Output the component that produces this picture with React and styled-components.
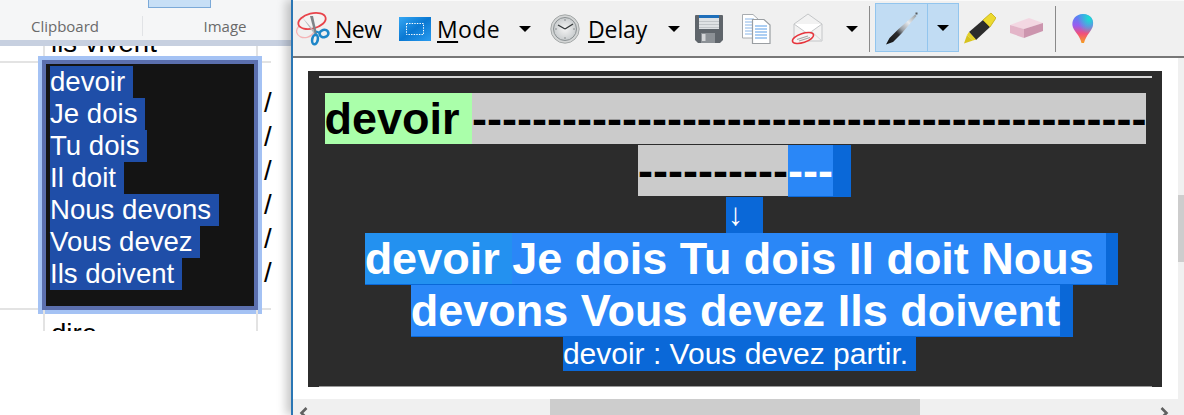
import React from "react";
import styled, { createGlobalStyle } from "styled-components";

const GlobalStyle = createGlobalStyle`
  html, body {
    margin: 0;
    padding: 0;
    background: #fff;
    overflow: hidden;
  }
  #root {
    width: 1184px;
    height: 415px;
  }
`;

const Page = styled.div`
  display: flex;
  width: 1184px;
  height: 415px;
  overflow: hidden;
  font-family: "Liberation Sans", Arial, sans-serif;
`;

/* left window, the document behind the snipping tool */
const LeftPane = styled.div`
  display: flex;
  flex-direction: column;
  width: 291px;
  flex: none;
`;

const Ribbon = styled.div`
  position: relative;
  display: flex;
  height: 40px;
  background: #f5f6f7;
  font-family: "Open Sans", sans-serif;
  font-size: 15px;
  color: #6a6a6a;
`;

const RibbonGroup = styled.div`
  flex: none;
  width: ${({ $w }) => $w}px;
  padding-left: ${({ $pl }) => $pl || 0}px;
  padding-right: ${({ $pr }) => $pr || 0}px;
  height: 20px;
  margin-top: 16px;
  line-height: 20px;
  text-align: center;
  border-right: ${({ $sep }) => ($sep ? "1px solid #e1e3e6" : "none")};
`;

const RibbonButton = styled.div`
  position: absolute;
  left: 148px;
  top: -1px;
  width: 61px;
  height: 7px;
  background: #c7dff6;
  border: 1px solid #7ba9d8;
`;

const RibbonEdge = styled.div`
  height: 6px;
  background: #c7d0e0;
`;

const TableRow = styled.div`
  position: relative;
  display: flex;
  width: 271px;
  height: ${({ $h }) => $h}px;
  flex: none;
  border-bottom: ${({ $last }) => ($last ? "none" : "2px solid #e3e3e3")};
`;

const Cell = styled.div`
  box-sizing: border-box;
  width: 215px;
  margin-left: 43px;
  padding-left: 6px;
  border-left: 2px solid #e3e3e3;
  border-right: 2px solid #e3e3e3;
  overflow: hidden;
  font-size: 27.6px;
  line-height: 32px;
  color: #000;
  flex: none;
`;

const ClippedWord = styled.div`
  margin-top: ${({ $top }) => $top}px;
`;

const Slashes = styled.div`
  display: flex;
  flex-direction: column;
  padding: 23px 0 0 6px;
  font-size: 27.6px;
  line-height: 34px;
  width: 8px;
  color: #000;
`;

const NoteCard = styled.div`
  position: absolute;
  left: 38px;
  top: -7px;
  box-sizing: border-box;
  width: 224px;
  height: 258px;
  padding: 6px 8px;
  background: #141414;
  border: 4px solid #a4c2f4;
  box-shadow: inset 0 0 0 4px #5b6fae;
  display: flex;
  flex-direction: column;
  align-items: flex-start;
`;

const NoteLine = styled.span`
  display: block;
  height: 32px;
  font-size: 27.6px;
  line-height: 32px;
  white-space: pre;
  color: #fff;
  background: #1f4ea8;
`;

/* snipping tool window */
const RightPane = styled.div`
  position: relative;
  display: flex;
  flex-direction: column;
  flex: 1;
  min-width: 0;
  box-sizing: border-box;
  background: #fff;
  border-left: 2px solid #2a76b4;
  box-shadow: -5px 0 9px rgba(0, 0, 0, 0.22);
`;

const Toolbar = styled.div`
  display: flex;
  align-items: center;
  box-sizing: border-box;
  height: 58px;
  flex: none;
  padding-left: 3px;
  background: #f0f0f0;
  border-top: 1px solid #fafafa;
  border-bottom: 2px solid #777;
`;

const IconSlot = styled.div`
  display: flex;
  flex: none;
  width: ${({ $w }) => $w}px;
  margin-left: ${({ $ml }) => $ml || 0}px;
  svg {
    display: block;
  }
`;

const ToolLabel = styled.span`
  flex: none;
  width: ${({ $w }) => $w}px;
  margin-left: ${({ $ml }) => $ml || 0}px;
  margin-top: 1px;
  font-family: "Open Sans", sans-serif;
  font-size: 23px;
  letter-spacing: ${({ $ls }) => $ls}px;
  white-space: nowrap;
  color: #000;
  u {
    text-underline-offset: 3px;
    text-decoration-thickness: 1.5px;
  }
`;

const Caret = styled.span`
  flex: none;
  width: 0;
  height: 0;
  margin-left: ${({ $ml }) => $ml || 0}px;
  border-left: 6.5px solid transparent;
  border-right: 6.5px solid transparent;
  border-top: 6.5px solid #000;
`;

const ToolSep = styled.span`
  flex: none;
  width: 1px;
  height: 46px;
  margin-left: ${({ $ml }) => $ml}px;
  background: #8a8a8a;
`;

const PenButton = styled.div`
  display: flex;
  flex: none;
  box-sizing: border-box;
  width: 84px;
  height: 49px;
  margin-left: 5px;
  margin-top: -2px;
  background: #c1dcf3;
  border: 1px solid #92c5ee;
`;

const PenFace = styled.div`
  display: flex;
  align-items: center;
  justify-content: center;
  width: 51px;
  border-right: 1px solid #92c5ee;
`;

const PenCaret = styled.div`
  display: flex;
  flex: 1;
  align-items: center;
  justify-content: center;
`;

const Middle = styled.div`
  display: flex;
  flex: 1;
  min-height: 0;
`;

const Canvas = styled.div`
  flex: 1;
  min-width: 0;
  padding: 13px 16px 12px 15px;
`;

const DarkPanel = styled.div`
  display: flex;
  flex-direction: column;
  box-sizing: border-box;
  height: 316px;
  padding: 5px 10px 0 11px;
  background: #2c2c2c;
`;

const TopRule = styled.div`
  flex: none;
  height: 2px;
  margin-bottom: 15px;
  background: #d8d8d8;
`;

const BottomRule = styled.div`
  flex: none;
  height: 1px;
  margin-top: auto;
  background: #9a9a9a;
`;

const CardLine = styled.div`
  display: flex;
  justify-content: center;
  flex: none;
  height: ${({ $h }) => $h || 52}px;
  white-space: pre;
  margin: 0 -6px;
`;

const Piece = styled.span`
  display: block;
  height: 51px;
  font-size: 45px;
  line-height: 51px;
  font-weight: 700;
  color: ${({ $light }) => ($light ? "#fff" : "#000")};
  background: ${({ $bg }) => $bg};
`;

/* selection run: dark tail hangs past the centred text */
const Selected = styled.span`
  display: flex;
  height: 52px;
  background: #0a68d8;
  padding-right: ${({ $tail }) => $tail}px;
  margin-right: -${({ $tail }) => $tail}px;
`;

const ArrowRun = styled.span`
  display: block;
  width: 19px;
  height: 36px;
  padding-right: 18px;
  margin-right: -18px;
  background: #0a68d8;
  color: #fff;
  font-size: 31px;
  line-height: 36px;
  text-align: center;
`;

const SentenceRun = styled.span`
  display: block;
  height: 34px;
  padding-right: 8px;
  margin-right: -8px;
  background: #0a68d8;
  color: #fff;
  font-size: 30px;
  line-height: 34px;
`;

const VTrack = styled.div`
  width: 6px;
  flex: none;
  background: #f0f0f0;
`;

const VThumb = styled.div`
  width: 6px;
  height: 67px;
  margin-top: 137px;
  background: #cdcdcd;
`;

const HTrack = styled.div`
  display: flex;
  align-items: flex-start;
  height: 16px;
  flex: none;
  background: #f0f0f0;
`;

const HThumb = styled.div`
  width: 370px;
  height: 16px;
  margin-left: 242px;
  background: #cdcdcd;
`;

const Chevron = styled.svg`
  flex: none;
  margin: 8px 0 0 ${({ $ml }) => $ml}px;
`;

const ScissorsIcon = () => (
  <svg width="34" height="36" viewBox="0 0 34 36">
    <ellipse cx="9.5" cy="19.5" rx="9" ry="7" fill="none" stroke="#f4b4b6" strokeWidth="1.3" transform="rotate(-14 9.5 19.5)" />
    <ellipse cx="16" cy="10" rx="14" ry="7.5" fill="#f4f2f2" stroke="#e8434a" strokeWidth="1.8" transform="rotate(-14 16 10)" />
    <path d="M6 6 L19 24 L21 23 Z" fill="#b4b8bc" />
    <path d="M14 5 L17 5 L21 23 L19 24Z" fill="#7f8387" />
    <ellipse cx="19" cy="28.5" rx="2.8" ry="4.8" fill="none" stroke="#1e86c8" strokeWidth="2.6" transform="rotate(10 19 28.5)" />
    <ellipse cx="28" cy="22.5" rx="4.4" ry="3.6" fill="none" stroke="#1e86c8" strokeWidth="2.6" transform="rotate(-15 28 22.5)" />
    <path d="M19.5 23 L18.5 25 M20 20.5 L24 22" stroke="#1e86c8" strokeWidth="2.2" />
  </svg>
);

const ModeIcon = () => (
  <svg width="32" height="24" viewBox="0 0 32 24">
    <defs>
      <linearGradient id="modeFill" x1="0" y1="0" x2="1" y2="1">
        <stop offset="0" stopColor="#36a8f4" />
        <stop offset="0.5" stopColor="#0a78d2" />
        <stop offset="1" stopColor="#2a9cf0" />
      </linearGradient>
    </defs>
    <rect x="0" y="0" width="32" height="24" fill="url(#modeFill)" />
    <rect x="7.5" y="6.5" width="17" height="11" fill="none" stroke="#fff" strokeDasharray="1.4 1.2" />
  </svg>
);

const ClockIcon = () => (
  <svg width="30" height="30" viewBox="0 0 30 30">
    <defs>
      <radialGradient id="clockFace" cx="0.5" cy="0.5" r="0.55">
        <stop offset="0" stopColor="#f4f4f4" />
        <stop offset="1" stopColor="#c4c8ca" />
      </radialGradient>
    </defs>
    <circle cx="15" cy="15" r="14.2" fill="#d4d6d6" stroke="#a4a8a8" />
    <circle cx="15" cy="15" r="11.5" fill="url(#clockFace)" stroke="#8a9092" />
    <path d="M15 15 L8 11 M15 15 L23 10" stroke="#33383a" strokeWidth="1.4" />
    <path d="M15 5v2M15 23v2M5 15h2M23 15h2" stroke="#8a8e90" />
  </svg>
);

const SaveIcon = () => (
  <svg width="28" height="28" viewBox="0 0 28 28">
    <path d="M1 0 H27 A1 1 0 0 1 28 1 V25 L25 28 H3 L0 25 V1 A1 1 0 0 1 1 0Z" fill="#5f656b" />
    <rect x="4" y="0" width="20" height="3" fill="#1f6fba" />
    <rect x="4" y="3" width="20" height="11" fill="#dfe2e4" />
    <path d="M4 6.5h20M4 9.5h20M4 12.5h20" stroke="#c1c5c8" />
    <rect x="6" y="18" width="14" height="10" fill="#8c9196" />
    <rect x="7" y="19" width="3.5" height="7" fill="#d4d6d8" />
  </svg>
);

const CopyIcon = () => (
  <svg width="29" height="30" viewBox="0 0 29 30">
    <path d="M0.5 0.5H11L17 6V24H0.5Z" fill="#fff" stroke="#a8acb0" />
    <path d="M3 5h9M3 8h11M3 11h11M3 14h11M3 17h11M3 20h11" stroke="#8ab6e8" />
    <path d="M10.5 5.5H22L28 11V29.5H10.5Z" fill="#fff" stroke="#9a9ea2" strokeWidth="1.2" />
    <path d="M13 12h12M13 15h12M13 18h12M13 21h12M13 24h12" stroke="#5b9de8" strokeWidth="1.2" />
  </svg>
);

const MailIcon = () => (
  <svg width="32" height="32" viewBox="0 0 32 32">
    <path d="M3 11 L17 1 L31 11 V28 H3Z" fill="#f2f2f2" stroke="#c4c6c8" />
    <path d="M3 11 L17 21 L31 11" fill="#fff" stroke="#c4c6c8" />
    <path d="M3 28 L14 18 M31 28 L20 18" stroke="#d4d6d8" />
    <ellipse cx="12" cy="25" rx="11" ry="4.5" fill="#f7f3f3" stroke="#e6343c" strokeWidth="1.5" transform="rotate(-18 12 25)" />
    <path d="M6 26.5 L17 23 M8 28 L19 24.5" stroke="#a6a6a6" strokeWidth="1.2" />
  </svg>
);

const PenIcon = () => (
  <svg width="34" height="34" viewBox="0 0 34 34">
    <defs>
      <linearGradient id="penBody" gradientUnits="userSpaceOnUse" x1="1" y1="33" x2="32" y2="3">
        <stop offset="0" stopColor="#111" />
        <stop offset="0.36" stopColor="#2c2c2e" />
        <stop offset="0.5" stopColor="#9aa0a6" />
        <stop offset="0.72" stopColor="#e6eaee" />
        <stop offset="1" stopColor="#8e9498" />
      </linearGradient>
    </defs>
    <path d="M1 33.5 L4.5 27 L13.5 18 L17.5 21.5 L8 31Z L1 33.5 M13.5 18 L30 3.5 L31.5 5 L17.5 21.5Z" fill="url(#penBody)" />
    <rect x="30.5" y="1.5" width="2" height="2" fill="#55595d" />
  </svg>
);

const HighlighterIcon = () => (
  <svg width="32" height="34" viewBox="0 0 32 34">
    <path d="M0 31.5 L3 23 L9 28.5Z" fill="#d7c31e" />
    <path d="M5 20 L19 8 L26 15 L12 28Z" fill="#2c2c2c" />
    <path d="M19 8 L27 1 L32 6 L26 15Z" fill="#ecd92e" stroke="#c2ac10" strokeWidth="0.8" />
    <path d="M3 23 L9 28.5 L12 27.5 L5 20Z" fill="#e3cf24" />
  </svg>
);

const EraserIcon = () => (
  <svg width="33" height="22" viewBox="0 0 33 22">
    <path d="M0 7 L19 0 L33 5 L14 11Z" fill="#f3d7e2" />
    <path d="M0 7 L14 11 V20 L0 15Z" fill="#e3b5c8" />
    <path d="M14 11 L33 5 V13 L14 20Z" fill="#cc95ae" />
  </svg>
);

const PaintIcon = () => (
  <svg width="22" height="30" viewBox="0 0 22 30">
    <defs>
      <linearGradient id="paintDrop" x1="0" y1="0" x2="0" y2="1">
        <stop offset="0" stopColor="#4a8cf4" />
        <stop offset="0.4" stopColor="#9a5cf0" />
        <stop offset="0.68" stopColor="#f2507a" />
        <stop offset="1" stopColor="#f6a020" />
      </linearGradient>
      <radialGradient id="paintGlow" cx="0.8" cy="0.15" r="0.55">
        <stop offset="0" stopColor="#18e0d0" />
        <stop offset="1" stopColor="#18e0d0" stopOpacity="0" />
      </radialGradient>
    </defs>
    <path d="M11 0 C18 0 22 5 21 11 C20 17 14 21 12 29 L9.5 29 C8 21 1 17 0.4 11 C0 5 4 0 11 0Z" fill="url(#paintDrop)" />
    <path d="M11 0 C18 0 22 5 21 11 C20 17 14 21 12 29 L9.5 29 C8 21 1 17 0.4 11 C0 5 4 0 11 0Z" fill="url(#paintGlow)" />
  </svg>
);

const DOWN = "\u2193";

export default function App() {
  const dashes = "-".repeat(45);

  return (
    <Page>
      <GlobalStyle />
      <LeftPane>
        <Ribbon>
          <RibbonGroup $w={130} $pr={12} $sep>Clipboard</RibbonGroup>
          <RibbonGroup $w={132} $pl={16}>Image</RibbonGroup>
          <RibbonButton />
        </Ribbon>
        <RibbonEdge />
        <TableRow $h={15}>
          <Cell>
            <ClippedWord $top={-19}>ils vivent</ClippedWord>
          </Cell>
        </TableRow>
        <TableRow $h={245}>
          <Cell />
          <Slashes>
            {[0, 1, 2, 3, 4, 5].map((i) => (
              <span key={i}>/</span>
            ))}
          </Slashes>
          <NoteCard>
            <NoteLine>devoir </NoteLine>
            <NoteLine>Je dois </NoteLine>
            <NoteLine>Tu dois </NoteLine>
            <NoteLine>Il doit </NoteLine>
            <NoteLine>Nous devons </NoteLine>
            <NoteLine>Vous devez </NoteLine>
            <NoteLine>Ils doivent </NoteLine>
          </NoteCard>
        </TableRow>
        <TableRow $h={21} $last>
          <Cell>
            <ClippedWord $top={8}>dire</ClippedWord>
          </Cell>
        </TableRow>
      </LeftPane>

      <RightPane>
        <Toolbar>
          <IconSlot $w={34}><ScissorsIcon /></IconSlot>
          <ToolLabel $w={47} $ml={5} $ls={-0.5}><u>N</u>ew</ToolLabel>
          <IconSlot $w={32} $ml={17}><ModeIcon /></IconSlot>
          <ToolLabel $w={63} $ml={6} $ls={0.4}><u>M</u>ode</ToolLabel>
          <Caret $ml={19} />
          <IconSlot $w={30} $ml={19}><ClockIcon /></IconSlot>
          <ToolLabel $w={59} $ml={8} $ls={-0.1}><u>D</u>elay</ToolLabel>
          <Caret $ml={21} />
          <IconSlot $w={28} $ml={15}><SaveIcon /></IconSlot>
          <IconSlot $w={29} $ml={19}><CopyIcon /></IconSlot>
          <IconSlot $w={32} $ml={20}><MailIcon /></IconSlot>
          <Caret $ml={23} />
          <ToolSep $ml={11} />
          <PenButton>
            <PenFace><PenIcon /></PenFace>
            <PenCaret><Caret /></PenCaret>
          </PenButton>
          <IconSlot $w={32} $ml={5}><HighlighterIcon /></IconSlot>
          <IconSlot $w={33} $ml={14}><EraserIcon /></IconSlot>
          <ToolSep $ml={12} />
          <IconSlot $w={22} $ml={16}><PaintIcon /></IconSlot>
        </Toolbar>

        <Middle>
          <Canvas>
            <DarkPanel>
              <TopRule />
              <CardLine>
                <Piece $bg="#aaffaa">devoir </Piece>
                <Piece $bg="#cbcbcb">{dashes}</Piece>
              </CardLine>
              <CardLine>
                <Piece $bg="#cbcbcb">{"-".repeat(10)}</Piece>
                <Selected $tail={18}>
                  <Piece $bg="#2a87f7" $light>---</Piece>
                </Selected>
              </CardLine>
              <CardLine $h={36}>
                <ArrowRun>{DOWN}</ArrowRun>
              </CardLine>
              <CardLine>
                <Selected $tail={12}>
                  <Piece $bg="#2391f0" $light>devoir </Piece>
                  <Piece $bg="#2a87f7" $light>Je dois Tu dois Il doit Nous </Piece>
                </Selected>
              </CardLine>
              <CardLine>
                <Selected $tail={13}>
                  <Piece $bg="#2a87f7" $light>devons Vous devez Ils doivent</Piece>
                </Selected>
              </CardLine>
              <CardLine $h={34}>
                <SentenceRun>devoir : Vous devez partir.</SentenceRun>
              </CardLine>
              <BottomRule />
            </DarkPanel>
          </Canvas>
          <VTrack>
            <VThumb />
          </VTrack>
        </Middle>

        <HTrack>
          <Chevron $ml={6} width="9" height="12" viewBox="0 0 9 12">
            <path d="M7.5 1 L2.5 6 L7.5 11" fill="none" stroke="#606060" strokeWidth="2.6" />
          </Chevron>
          <HThumb />
          <Chevron $ml={240} width="9" height="12" viewBox="0 0 9 12">
            <path d="M1.5 1 L6.5 6 L1.5 11" fill="none" stroke="#606060" strokeWidth="2.6" />
          </Chevron>
        </HTrack>
      </RightPane>
    </Page>
  );
}
